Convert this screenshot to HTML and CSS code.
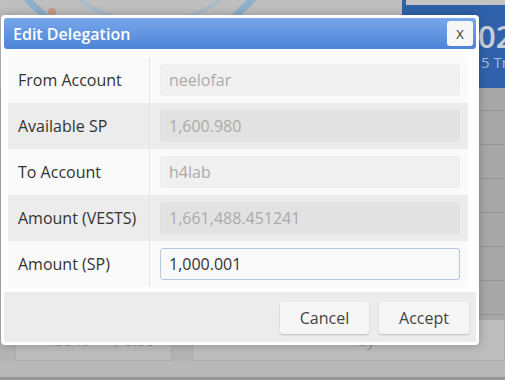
FILE: index.html
```html
<!DOCTYPE html>
<html lang="en">
<head>
    <meta charset="UTF-8">
    <meta name="viewport" content="width=device-width, initial-scale=1.0">
    <title>Edit Delegation</title>
    <link rel="stylesheet" href="styles.css">
</head>
<body>
    <div class="page">
        <div class="top">
            <div class="hero">
                <svg class="ring" width="400" height="88" viewBox="0 0 400 88">
                    <circle cx="140" cy="-100" r="150" fill="none" stroke="#8fb0cb" stroke-width="7"/>
                    <circle cx="150" cy="-95" r="118" fill="none" stroke="#a9bccb" stroke-width="4"/>
                    <circle cx="52" cy="12" r="4" fill="#c79a88"/>
                </svg>
            </div>
            <div class="stat">
                <div class="stat-bar"></div>
                <div class="stat-num">02</div>
                <div class="stat-sub">5 Trx</div>
            </div>
        </div>
        <div class="main">
            <div class="content"></div>
            <div class="side">
                <div class="side-row"></div>
                <div class="side-row"></div>
                <div class="side-row"></div>
                <div class="side-row"></div>
                <div class="side-row"></div>
                <div class="side-row"></div>
                <div class="side-row"></div>
            </div>
        </div>
        <div class="cards">
            <div class="card card-small">
                <span>100 %</span>
                <span>$ 0.00</span>
            </div>
            <div class="card card-wide">
                <span class="card-text">by</span>
            </div>
        </div>
    </div>

    <div class="dialog">
        <div class="titlebar">
            <span class="title">Edit Delegation</span>
            <button class="close">X</button>
        </div>
        <div class="dialog-body">
            <table class="form">
                <tr>
                    <td class="label">From Account</td>
                    <td class="field"><input type="text" value="neelofar" disabled></td>
                </tr>
                <tr class="alt">
                    <td class="label">Available SP</td>
                    <td class="field"><input type="text" value="1,600.980" disabled></td>
                </tr>
                <tr>
                    <td class="label">To Account</td>
                    <td class="field"><input type="text" value="h4lab" disabled></td>
                </tr>
                <tr class="alt">
                    <td class="label">Amount (VESTS)</td>
                    <td class="field"><input type="text" value="1,661,488.451241" disabled></td>
                </tr>
                <tr>
                    <td class="label">Amount (SP)</td>
                    <td class="field"><input type="text" class="active" value="1,000.001"></td>
                </tr>
            </table>
        </div>
        <div class="footer">
            <button class="btn">Cancel</button>
            <button class="btn">Accept</button>
        </div>
    </div>
</body>
</html>
```

FILE: styles.css
```css
body {
    margin: 0;
    font-family: "Open Sans", "Liberation Sans", sans-serif;
    width: 505px;
    height: 380px;
    overflow: hidden;
    position: relative;
}

/* dimmed page behind the dialog */
.page {
    display: flex;
    flex-direction: column;
    height: 380px;
    background: #b8b8b8;
}
.top {
    display: flex;
    height: 88px;
}
.hero {
    flex: 1;
    background: #bfbfbf;
    overflow: hidden;
}
.ring {
    display: block;
}
.stat {
    width: 103px;
    background: #2f62ab;
    padding-left: 4px;
    box-sizing: border-box;
    overflow: hidden;
    white-space: nowrap;
}
.stat-bar {
    height: 5px;
    background: #c4c4c4;
}
.stat-num {
    font-size: 31px;
    font-weight: 600;
    color: #c9cfd9;
    line-height: 28px;
    margin-top: 17px;
    padding-left: 72px;
}
.stat-sub {
    font-size: 15px;
    line-height: 18px;
    margin-top: 3px;
    color: #a9b9d1;
    padding-left: 75px;
}
.main {
    display: flex;
    height: 232px;
}
.content {
    flex: 1;
    background: #b3b3b3;
}
.side {
    width: 103px;
    background: #a7a7a7;
    padding-top: 22px;
}
.side-row {
    height: 33px;
    border-top: 1px solid #959595;
}
.cards {
    display: flex;
    gap: 20px;
    padding: 0 0 0 15px;
    height: 41px;
    border-bottom: 16px solid #b9b9b9;
    box-shadow: 0 3px 0 #979797;
    background: #b3b3b3;
}
.card {
    background: #bdbdbd;
    border: 1px solid #adadad;
    border-top: none;
    display: flex;
    align-items: center;
    font-size: 15px;
    color: #8e8e8e;
}
.card-small {
    width: 157px;
    gap: 24px;
    padding-left: 30px;
    box-sizing: border-box;
}
.card-wide {
    flex: 1;
    padding-left: 165px;
}

/* dialog */
.dialog {
    position: absolute;
    left: 1px;
    top: 15px;
    width: 478px;
    height: 330px;
    box-sizing: border-box;
    padding: 3px;
    background: #fff;
    border-radius: 4px;
    box-shadow: 0 0 10px rgba(0, 0, 0, 0.25);
    display: flex;
    flex-direction: column;
}
.titlebar {
    height: 31px;
    display: flex;
    align-items: center;
    justify-content: space-between;
    padding: 0 3px 0 9px;
    border-radius: 3px;
    background: linear-gradient(#78a7ec, #4c84d6);
}
.title {
    color: #fff;
    font-size: 16px;
    font-weight: 600;
}
.close {
    width: 26px;
    height: 25px;
    border: none;
    border-radius: 3px;
    background: #f7f7f7;
    color: #333;
    font-family: "Open Sans", sans-serif;
    font-size: 13px;
    padding: 0;
}
.dialog-body {
    padding: 8px 8px 5px 4px;
}
.form {
    width: 460px;
    border-collapse: collapse;
}
.form tr {
    background: #fafafa;
}
.form tr.alt {
    background: #ececec;
}
.label {
    width: 131px;
    height: 32px;
    padding: 7px 0 7px 10px;
    border-right: 1px solid #e6e6e6;
    font-size: 16px;
    color: #333;
}
.field {
    padding: 7px 7px 7px 10px;
}
.field input {
    display: block;
    width: 300px;
    height: 32px;
    box-sizing: border-box;
    padding: 0 8px;
    border: 1px solid rgba(0, 0, 0, 0.01);
    border-radius: 3px;
    background: rgba(0, 0, 0, 0.04);
    font-family: "Open Sans", sans-serif;
    font-size: 16px;
    color: #aaa;
}
.field input.active {
    background: #f9f9f9;
    border-color: #b5c9dd;
    color: #333;
}
.footer {
    flex: 1;
    background: #ececec;
    display: flex;
    justify-content: flex-end;
    align-items: flex-start;
    gap: 10px;
    padding: 10px 7px 0 0;
}
.btn {
    height: 32px;
    width: 89px;
    border: none;
    border-radius: 3px;
    background: #f6f6f6;
    box-shadow: 0 1px 2px rgba(0, 0, 0, 0.2);
    font-family: "Open Sans", sans-serif;
    font-size: 16px;
    color: #444;
}
.btn + .btn {
    width: 90px;
}
```
